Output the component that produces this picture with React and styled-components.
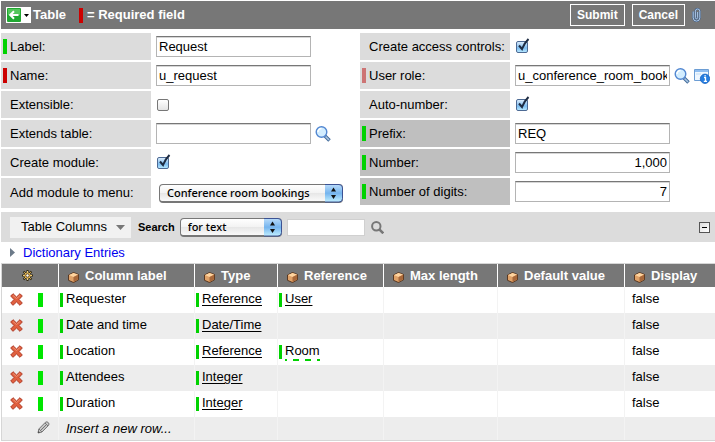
import React from "react";
import styled, { createGlobalStyle, css } from "styled-components";

const GlobalStyle = createGlobalStyle`
  * { box-sizing: border-box; }
  body {
    margin: 0;
    background: #fff;
    color: #000;
    font: 13px/16px "Liberation Sans", Arial, sans-serif;
  }
  button, input, select { font: inherit; color: inherit; margin: 0; }
  svg { display: block; flex: none; }
`;

const GREEN = "#00d200";
const RED = "#cc0000";
const ROSE = "#cd7474";

const Page = styled.main`
  padding: 1px 0 0 1px;
`;

const TitleBar = styled.header`
  display: flex;
  align-items: center;
  height: 28px;
  padding: 0 14px 0 5px;
  background: #777;
  color: #fff;
`;

const BackButton = styled.button`
  display: flex;
  align-items: center;
  gap: 3px;
  width: 25px;
  height: 16px;
  padding: 0 1px;
  border: 0;
  background: #fff;
`;

const Title = styled.h1`
  margin: 0 13px 0 2px;
  font-size: 13px;
  line-height: 16px;
`;

const Marker = styled.span`
  flex: none;
  width: ${(p) => p.$width || 4}px;
  height: ${(p) => p.$height || 15}px;
  background: ${(p) => p.$color || "transparent"};
`;

const Legend = styled.span`
  margin: 0 auto 0 4px;
  font-weight: bold;
`;

const ActionButton = styled.button`
  height: 22px;
  margin-right: 7px;
  padding: 0 6px;
  border: 1px solid #fff;
  background: transparent;
  font-size: 12px;
  font-weight: bold;
  line-height: 16px;
`;

const IconButton = styled.button`
  display: flex;
  padding: 0;
  border: 0;
  background: transparent;
`;

const FormGrid = styled.form`
  display: grid;
  grid-template-columns: 1fr 1fr;
  gap: 4px;
  align-items: start;
  margin: 4px 0;
`;

const FormColumn = styled.div`
  display: grid;
  gap: 2px;
`;

const Field = styled.div`
  display: flex;
  align-items: center;
  gap: 4px;
  min-height: ${(p) => (p.$tall ? 30 : 27)}px;
`;

const FieldLabel = styled.label`
  display: flex;
  flex: none;
  align-items: center;
  align-self: stretch;
  gap: 3px;
  width: 150px;
  margin-right: 1px;
  padding-left: 2px;
  background: ${(p) => (p.$dark ? "#bfbfbf" : "#dcdcdc")};
  white-space: nowrap;
`;

const TextInput = styled.input`
  flex: 0 1 155px;
  min-width: 0;
  height: 21px;
  padding: 0 2px 1px;
  border: 1px solid #b4b4b4;
  border-top-color: #777;
  background: #fff;
  box-shadow: inset 0 1px #d6d6d6;
  text-align: ${(p) => (p.$right ? "right" : "left")};
`;

const CheckFrame = styled.span`
  position: relative;
  width: 12px;
  height: 12px;
  margin-left: 1px;

  svg {
    position: absolute;
    left: 0;
    top: -3px;
    pointer-events: none;
  }
`;

const CheckInput = styled.input`
  appearance: none;
  display: block;
  width: 12px;
  height: 12px;
  border: 1px solid #777;
  border-radius: 2px;
  background: linear-gradient(#fff, #e4e4e4);

  & + svg { display: none; }
  &:checked {
    border-color: #4d6a94;
    background: linear-gradient(#d9ebfb, #7cbcf0 60%, #b4e6ff);
  }
  &:checked + svg { display: block; }
`;

const SelectFrame = styled.span`
  position: relative;
  display: flex;
  width: ${(p) => p.$width}px;
  height: 19px;
  margin-left: ${(p) => p.$inset || 0}px;

  svg {
    position: absolute;
    right: 0;
    top: 0;
    pointer-events: none;
  }
`;

const SelectBox = styled.select`
  appearance: none;
  width: 100%;
  padding: 0 20px 0 7px;
  border: 1px solid #777;
  border-bottom-width: 2px;
  border-radius: 4px;
  background: linear-gradient(#fff, #f3f3f3 50%, #e6e6e6 51%, #fafafa);
  font: 500 11px/16px "Noto Sans", sans-serif;
`;

const ListBar = styled.div`
  display: flex;
  align-items: center;
  height: 30px;
  padding: 0 5px 0 9px;
  background: #dcdcdc;
`;

const MenuButton = styled.button`
  display: flex;
  align-items: center;
  gap: 9px;
  height: 21px;
  margin-right: 7px;
  padding: 0 6px 0 11px;
  border: 0;
  background: #f1f1f1;
`;

const SearchLabel = styled.label`
  margin-right: 5px;
  font-size: 11px;
  font-weight: bold;
`;

const SearchInput = styled.input`
  width: 78px;
  height: 17px;
  margin: 0 6px 0 5px;
  padding: 0 2px;
  border: 1px solid #d0d0d0;
  background: #fff;
`;

const CollapseButton = styled.button`
  display: flex;
  align-items: center;
  justify-content: center;
  width: 11px;
  height: 11px;
  margin-left: auto;
  padding: 0;
  border: 1px solid #555;
  background: linear-gradient(135deg, #ddd, #fff);
`;

const Breadcrumb = styled.nav`
  display: flex;
  align-items: center;
  gap: 8px;
  height: 21px;
  padding-left: 9px;

  a {
    color: #0000f0;
    text-decoration: none;
  }
`;

const Grid = styled.table`
  width: 100%;
  table-layout: fixed;
  border-collapse: separate;
  border-spacing: 0;
  border: solid #d6d6d6;
  border-width: 1px 0 1px 1px;
`;

const HeadCell = styled.th`
  height: 23px;
  padding: 0 0 0 ${(p) => (p.$first ? 20 : 9)}px;
  border-left: ${(p) => (p.$first ? 0 : 1)}px solid #fff;
  background: #777;
  color: #fff;
  text-align: left;
  white-space: nowrap;
`;

const HeadContent = styled.span`
  display: flex;
  align-items: center;
  gap: 6px;

  svg { margin-top: 3px; }
`;

const Row = styled.tr`
  background: ${(p) => (p.$shaded ? "#ededed" : "#fff")};
`;

const cellBase = css`
  height: ${(p) => (p.$last ? 23 : 26)}px;
  vertical-align: top;
`;

const ActionCell = styled.td`
  ${cellBase}
  padding: ${(p) => (p.$last ? 4 : 6)}px 0 0 8px;

  & > div {
    display: flex;
    gap: 15px;
    justify-content: ${(p) => (p.$last ? "flex-end" : "flex-start")};
    padding-right: ${(p) => (p.$last ? 8 : 0)}px;
  }
`;

const DataCell = styled.td`
  ${cellBase}
  padding: 4px 0 0 1px;
  border-left: 1px solid #f3f3f3;
  font-style: ${(p) => (p.$last ? "italic" : "normal")};
  white-space: nowrap;

  a { color: #000; text-underline-offset: 2px; }
`;

const CellContent = styled.div`
  display: flex;
  align-items: flex-start;
  gap: 3px;

  & > ${Marker} { margin-top: 2px; }
`;

const PendingValue = styled.span`
  padding-bottom: 2px;
  background: repeating-linear-gradient(90deg, ${GREEN} 0 2px, transparent 2px 8px, ${GREEN} 8px 12px) left bottom / 12px 2px repeat-x;
`;

const BackIcon = () => (
  <svg width="14" height="14" viewBox="0 0 14 14">
    <rect width="14" height="14" rx="1" fill="#21a832" />
    <rect x="1" y="1" width="12" height="6" fill="#54c65c" />
    <path d="M11.500 7H3.500M7 3.200 3.200 7 7 10.800" fill="none" stroke="#fff" strokeWidth="2" />
  </svg>
);

const Triangle = ({ color = "#000", w = 5, h = 3 }) => (
  <svg width={w} height={h} viewBox="0 0 10 6" preserveAspectRatio="none">
    <path d="M0 0H10L5 6Z" fill={color} />
  </svg>
);

const ClipIcon = () => (
  <svg width="9" height="14" viewBox="0 0 9 14" fill="none">
    <path d="M1.200 3.500v6.300a3.300 3.300 0 0 0 6.600 0V3.200a2.200 2.200 0 0 0-4.400 0v6.500a1.100 1.100 0 0 0 2.200 0V4" stroke="#3d5f8a" strokeWidth="1.800" />
    <path d="M1.200 3.500v6.300a3.300 3.300 0 0 0 6.600 0V3.200a2.200 2.200 0 0 0-4.400 0v6.500a1.100 1.100 0 0 0 2.200 0V4" stroke="#bdd5f0" strokeWidth=".9" />
  </svg>
);

const LensIcon = () => (
  <svg width="16" height="16" viewBox="0 0 16 16">
    <path d="m10 10 4.500 4.500" stroke="#426b9a" strokeWidth="3.600" />
    <path d="m10.500 10.500 3.500 3.500" stroke="#a9c6e4" strokeWidth="1.600" />
    <circle cx="6.500" cy="6" r="5.300" fill="#d2edff" stroke="#5287d1" strokeWidth="1.400" />
    <path d="M3 6a3.500 3.500 0 0 1 3.500-3.500" fill="none" stroke="#fff" strokeWidth="1.500" />
  </svg>
);

const InfoWindowIcon = () => (
  <svg width="16" height="16" viewBox="0 0 16 16">
    <path d="M.5 1.500h14v11H.5Z" fill="#eef7ff" stroke="#6c9dd4" />
    <path d="M1 2h13v2H1Z" fill="#8fbdf0" />
    <path d="M2 6h5" stroke="#c1dcf5" />
    <circle cx="11" cy="10.800" r="4.700" fill="#267ee0" stroke="#1963c0" strokeWidth=".8" />
    <path d="M10 9.700h1.500V13M9.800 13.300h3.200M10.400 7.800h1.500" fill="none" stroke="#fff" strokeWidth="1.300" />
  </svg>
);

const SearchIcon = () => (
  <svg width="13" height="13" viewBox="0 0 13 13" fill="none" stroke="#777" strokeWidth="2">
    <circle cx="5.300" cy="5.300" r="4.200" />
    <path d="m8.300 8.300 4 4" strokeWidth="2.600" />
  </svg>
);

const GearIcon = () => (
  <svg width="11" height="14" viewBox="0 0 11 14">
    <path d="M5.500 0v11M0 5.500h11M1.500 1.500l8 8M9.500 1.500l-8 8" stroke="#352a11" strokeWidth="2" />
    <path d="M5.500 1v9M1 5.500h9M2.300 2.300l6.400 6.400M8.700 2.300 2.300 8.700" stroke="#f4cf75" />
    <circle cx="5.500" cy="5.500" r="3" fill="#e7b854" />
    <circle cx="5.500" cy="5.500" r="1.700" fill="#fff" stroke="#59421c" />
  </svg>
);

const CubeIcon = () => (
  <svg width="11" height="11" viewBox="0 0 11 11" stroke="#442510" strokeWidth=".8" strokeLinejoin="round">
    <path d="m.5 3 5-2.500 5 2v5.300l-5 2.700-5-2.200Z" fill="#e0a268" />
    <path d="m.9 3 4.600-2.100 4.600 1.700-4.600 2.300Z" fill="#ffd49f" stroke="none" />
    <path d="M5.500 5v5l4.600-2.500V2.800Z" fill="#a8683a" stroke="none" />
  </svg>
);

const DeleteIcon = () => (
  <svg width="13" height="13" viewBox="0 0 13 13">
    <path d="M3 .7 6.500 4 10 .7 12.300 3 9 6.500l3.300 3.500L10 12.300 6.500 9 3 12.300.7 10 4 6.500.7 3Z" fill="#e0603f" stroke="#b03c28" />
    <path d="m3 2.500 3.500 3 3.500-3" fill="none" stroke="#ee9273" />
  </svg>
);

const PencilIcon = () => (
  <svg width="13" height="13" viewBox="0 0 13 13">
    <path d="m1 12 .8-4L8.500 1.200q1.500-1 2.800.4t.3 2.700L5 11Z" fill="#c7c7c7" stroke="#777" />
    <path d="M8 2 11 5M2 8l3 3M3.500 9.500l6-6" stroke="#777" />
    <path d="m1 12 .4-2 1.600 1.600Z" fill="#444" />
  </svg>
);

const Tick = () => (
  <svg width="14" height="14" viewBox="0 0 14 14">
    <path d="m3 7.500 3 3.500Q8 5.500 12.500 1" fill="none" stroke="#1d2b42" strokeWidth="2" />
  </svg>
);

const Stepper = () => (
  <svg width="18" height="19" viewBox="0 0 18 19">
    <defs>
      <linearGradient id="stepper" x2="0" y2="1">
        <stop stopColor="#b9dcfa" />
        <stop offset=".5" stopColor="#75b4ee" />
        <stop offset="1" stopColor="#c1f0ff" />
      </linearGradient>
    </defs>
    <path d="M0 .5h14q3.500 0 3.500 3.500v10.500q0 3.500-3.500 3.500H0Z" fill="url(#stepper)" />
    <path d="M0 .5h14q3.500 0 3.500 3.500v10.500q0 3.500-3.500 3.500H0" fill="none" stroke="#3c5293" />
    <path d="m6 7.500 2.500-4 2.500 4ZM6 11h5l-2.500 4Z" fill="#111" />
  </svg>
);

function LabeledField({ id, label, marker, dark, tall, children }) {
  return (
    <Field $tall={tall}>
      <FieldLabel htmlFor={id} $dark={dark}>
        <Marker $color={marker} />
        {label}
      </FieldLabel>
      {children}
    </Field>
  );
}

const Check = ({ id, checked }) => (
  <CheckFrame>
    <CheckInput id={id} type="checkbox" defaultChecked={checked} />
    <Tick />
  </CheckFrame>
);

const Select = ({ id, label, width, inset, option }) => (
  <SelectFrame $width={width} $inset={inset}>
    <SelectBox id={id} aria-label={label}><option>{option}</option></SelectBox>
    <Stepper />
  </SelectFrame>
);

const Lookup = ({ label }) => (
  <IconButton type="button" aria-label={label}><LensIcon /></IconButton>
);

const columns = [
  { name: "Column label", width: 136 },
  { name: "Type", width: 83 },
  { name: "Reference", width: 106 },
  { name: "Max length", width: 114 },
  { name: "Default value", width: 127 },
  { name: "Display", width: 91 },
];

const Col = styled.col`
  width: ${(p) => p.$width}px;
`;

const records = [
  { name: "Requester", type: "Reference", reference: "User" },
  { name: "Date and time", type: "Date/Time" },
  { name: "Location", type: "Reference", reference: "Room", pending: true },
  { name: "Attendees", type: "Integer" },
  { name: "Duration", type: "Integer" },
];

function Cell({ marked, last, children }) {
  return (
    <DataCell $last={last}>
      <CellContent>
        <Marker $width={3} $height={14} $color={marked ? GREEN : undefined} />
        {children}
      </CellContent>
    </DataCell>
  );
}

export default function App() {
  return (
    <Page>
      <GlobalStyle />
      <TitleBar>
        <BackButton aria-label="Back"><BackIcon /><Triangle /></BackButton>
        <Title>Table</Title>
        <Marker $color={RED} />
        <Legend>= Required field</Legend>
        <ActionButton type="submit" form="table-form">Submit</ActionButton>
        <ActionButton type="button">Cancel</ActionButton>
        <IconButton aria-label="Attachments"><ClipIcon /></IconButton>
      </TitleBar>

      <FormGrid id="table-form" onSubmit={(e) => e.preventDefault()}>
        <FormColumn>
          <LabeledField id="label" label="Label:" marker={GREEN}>
            <TextInput id="label" defaultValue="Request" />
          </LabeledField>
          <LabeledField id="name" label="Name:" marker={RED}>
            <TextInput id="name" defaultValue="u_request" />
          </LabeledField>
          <LabeledField id="extensible" label="Extensible:">
            <Check id="extensible" />
          </LabeledField>
          <LabeledField id="extends" label="Extends table:">
            <TextInput id="extends" />
            <Lookup label="Look up table" />
          </LabeledField>
          <LabeledField id="module" label="Create module:">
            <Check id="module" checked />
          </LabeledField>
          <LabeledField id="menu" label="Add module to menu:" tall>
            <Select id="menu" width={184} inset={3} option="Conference room bookings" />
          </LabeledField>
        </FormColumn>
        <FormColumn>
          <LabeledField id="access" label="Create access controls:">
            <Check id="access" checked />
          </LabeledField>
          <LabeledField id="role" label="User role:" marker={ROSE}>
            <TextInput id="role" defaultValue="u_conference_room_book" />
            <Lookup label="Look up role" />
            <IconButton type="button" aria-label="Role details"><InfoWindowIcon /></IconButton>
          </LabeledField>
          <LabeledField id="auto" label="Auto-number:">
            <Check id="auto" checked />
          </LabeledField>
          <LabeledField id="prefix" label="Prefix:" marker={GREEN} dark>
            <TextInput id="prefix" defaultValue="REQ" />
          </LabeledField>
          <LabeledField id="number" label="Number:" marker={GREEN} dark>
            <TextInput id="number" defaultValue="1,000" $right />
          </LabeledField>
          <LabeledField id="digits" label="Number of digits:" marker={GREEN} dark>
            <TextInput id="digits" defaultValue="7" $right />
          </LabeledField>
        </FormColumn>
      </FormGrid>

      <ListBar>
        <MenuButton>Table Columns<Triangle color="#777" w={9} h={5} /></MenuButton>
        <SearchLabel htmlFor="query">Search</SearchLabel>
        <Select width={102} label="Search type" option="for text" />
        <SearchInput id="query" />
        <IconButton aria-label="Run search"><SearchIcon /></IconButton>
        <CollapseButton aria-label="Collapse list">
          <svg width="5" height="1"><path d="M0 .5h5" stroke="#000" /></svg>
        </CollapseButton>
      </ListBar>

      <Breadcrumb>
        <svg width="5" height="9"><path d="M0 0 5 4.500 0 9Z" fill="#6c7a89" /></svg>
        <a href="#entries">Dictionary Entries</a>
      </Breadcrumb>

      <Grid>
        <colgroup>
          <Col $width={56} />
          {columns.map((c) => <Col key={c.name} $width={c.width} />)}
        </colgroup>
        <thead>
          <tr>
            <HeadCell $first><HeadContent><GearIcon /></HeadContent></HeadCell>
            {columns.map((c) => (
              <HeadCell key={c.name}><HeadContent><CubeIcon />{c.name}</HeadContent></HeadCell>
            ))}
          </tr>
        </thead>
        <tbody>
          {records.map((r, i) => (
            <Row key={r.name} $shaded={i % 2 === 1}>
              <ActionCell>
                <div>
                  <IconButton aria-label={`Delete ${r.name}`}><DeleteIcon /></IconButton>
                  <Marker $width={5} $height={14} $color="#00e600" />
                </div>
              </ActionCell>
              <Cell marked>{r.name}</Cell>
              <Cell marked><a href="#type">{r.type}</a></Cell>
              <Cell marked={Boolean(r.reference)}>
                {r.reference && (r.pending
                  ? <PendingValue>{r.reference}</PendingValue>
                  : <a href="#reference">{r.reference}</a>)}
              </Cell>
              <Cell />
              <Cell />
              <Cell>false</Cell>
            </Row>
          ))}
          <Row $shaded>
            <ActionCell $last><div><PencilIcon /></div></ActionCell>
            <Cell last>Insert a new row...</Cell>
            <Cell last /><Cell last /><Cell last /><Cell last /><Cell last />
          </Row>
        </tbody>
      </Grid>
    </Page>
  );
}
